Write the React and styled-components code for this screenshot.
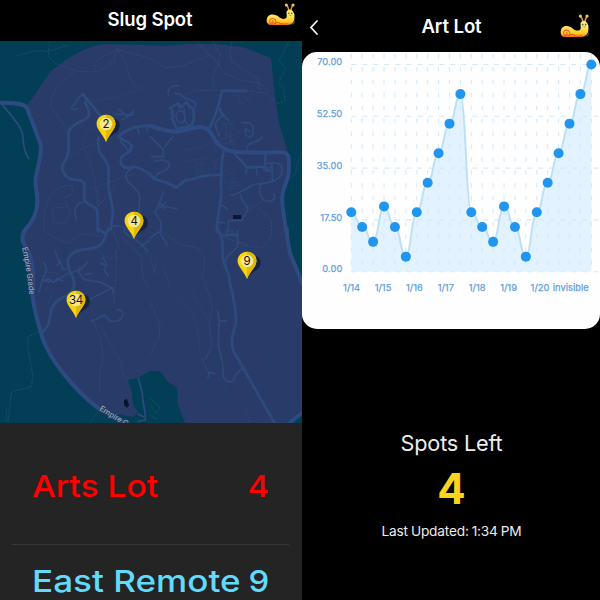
import React from 'react';
import styled, { createGlobalStyle } from 'styled-components';

const GlobalStyle = createGlobalStyle`
  *, *::before, *::after { box-sizing: border-box; }
  body { margin: 0; background: #000; font-family: Inter, "Liberation Sans", sans-serif; }
`;

const Screens = styled.main`
  display: grid;
  grid-template-columns: 302px 298px;
  width: 600px;
  height: 600px;
  overflow: hidden;
`;

const Screen = styled.section`
  display: flex;
  flex-direction: column;
  height: 600px;
  overflow: hidden;
  background: #000;
`;

const Header = styled.header`
  flex: none;
  display: grid;
  grid-template-columns: 36px 1fr 36px;
  height: ${(p) => p.$height}px;
  padding: ${(p) => p.$padding};
  color: #fff;
`;

const Title = styled.h1`
  margin: ${(p) => p.$drop || 0}px 0 0;
  text-align: center;
  white-space: nowrap;
  font-size: ${(p) => p.$size}px;
  font-weight: 600;
  line-height: 24px;
  letter-spacing: -0.1px;
`;

const BackIcon = styled.svg`
  width: 12px;
  height: 18px;
  margin: 4px 0 0 -5px;
`;

const SlugSvg = styled.svg`
  justify-self: end;
  width: ${(p) => p.$width}px;
  height: ${(p) => p.$height}px;
`;

const MapView = styled.div`
  flex: none;
  position: relative;
  height: 382px;
  overflow: hidden;
  background: #023f57;
`;

const MapDrawing = styled.svg`
  display: block;
  width: 302px;
  height: 382px;
`;

const Pin = styled.div`
  position: absolute;
  left: ${(p) => p.$x - 10}px;
  top: ${(p) => p.$y - 41}px;
  width: 26px;
  height: 29px;
`;

const PinSvg = styled.svg`
  display: block;
  width: 26px;
  height: 29px;
`;

const PinLabel = styled.span`
  position: absolute;
  left: 0;
  top: 3px;
  width: 20px;
  text-align: center;
  font-size: 11.5px;
  line-height: 14px;
  letter-spacing: -0.2px;
  color: #15130a;
`;

const LotList = styled.div`
  flex: 1;
  display: flex;
  flex-direction: column;
  padding: 0 13px 0 12px;
  background: #242424;
`;

const LotRow = styled.div`
  flex: none;
  display: flex;
  justify-content: space-between;
  height: 122px;
  padding: ${(p) => p.$top}px 20px 0 20px;
  border-bottom: 1px solid #373737;
  color: ${(p) => p.$color};
  font-size: 30.5px;
  font-weight: 500;
  line-height: 40px;
  white-space: nowrap;
`;

const LotName = styled.span`
  transform: scaleX(${(p) => p.$stretch});
  transform-origin: left;
`;

const LotCount = styled.span`
  transform: scaleX(1.08);
  transform-origin: right;
`;

const ChartCard = styled.div`
  flex: none;
  height: 277px;
  border-radius: 15px;
  background: #fefefe;
  overflow: hidden;
`;

const ChartSvg = styled.svg`
  display: block;
  width: 298px;
  height: 277px;
  font-family: Inter, sans-serif;
  font-size: 9.4px;
`;

const Summary = styled.div`
  display: flex;
  flex-direction: column;
  align-items: center;
  padding: 99px 0 0 1px;
  color: #ececec;
  white-space: nowrap;
`;

const SummaryTitle = styled.div`
  font-size: 21.7px;
  line-height: 30px;
  letter-spacing: -0.2px;
`;

const SpotCount = styled.div`
  margin-top: 8px;
  font-size: 42px;
  font-weight: 700;
  line-height: 46px;
  color: #fbd31c;
`;

const Updated = styled.div`
  margin-top: 9px;
  font-size: 13.7px;
  line-height: 20px;
  letter-spacing: -0.2px;
  word-spacing: -0.6px;
`;

function Slug({ id, width, height }) {
  return (
    <SlugSvg viewBox="0 0 90 70" preserveAspectRatio="none" $width={width} $height={height}>
      <defs>
        <linearGradient id={id} x1="0" y1="0" x2="0" y2="1">
          <stop offset="0.35" stopColor="#ffe66b" />
          <stop offset="0.78" stopColor="#ffcb20" />
          <stop offset="1" stopColor="#f4711b" />
        </linearGradient>
      </defs>
      <g fill="none" stroke="#d39a48" strokeWidth="4.5" strokeLinecap="round">
        <path d="M69 24 Q68 14 62 7M75 23 Q75 14 81 7" />
      </g>
      <circle cx="61" cy="6" r="4.8" fill="#f2bd69" />
      <circle cx="81" cy="6" r="4.8" fill="#f2bd69" />
      <path d="M78 24 Q87 33 87 49 Q86 66 65 67 L84 65 Q90 52 86 34Z" fill="#2b5d87" />
      <path d="M2 54 C2 30 28 32 38 42 C48 51 61 50 62 42 C64 34 58 27 65 22 C73 15 84 24 85 36 C87 53 82 67 63 67 L15 67 C7 67 2 62 2 54Z" fill={`url(#${id})`} />
      <path d="M27 63 C34 56 27 46 18 47 C10 48 8 59 16 61 C23 62 23 54 18 54" fill="none" stroke="#e96128" strokeWidth="3.2" />
      <path d="M8 64 C25 68 31 57 37 59 C45 66 58 65 65 63" fill="none" stroke="#e84f24" strokeWidth="3" />
      <circle cx="68" cy="31" r="2.4" fill="#315b68" />
      <circle cx="77" cy="31" r="2.4" fill="#315b68" />
      <path d="M70 37 Q73 39 76 37" fill="none" stroke="#826b2b" strokeWidth="2" />
    </SlugSvg>
  );
}

const TILES = [
  {
    at: [0, 40],
    wide: [
      'M-5 188 C30 188 65 188 78 200 C85 210 105 270 122 314 C125 345 116 370 110 400 C99 430 114 460 112 485 C112 515 100 545 72 574',
    ],
    main: [
      'M262 182 L255 190 C268 205 270 225 262 233 C240 248 205 258 205 280 C208 340 205 350 190 370 C180 385 192 405 207 416 C225 422 245 415 253 430 V480 C262 498 288 495 292 515 L294 574',
      'M248 162 L325 255 M295 292 C293 330 297 338 312 355 C330 378 325 385 326 450 C333 480 340 500 338 520 L332 570',
      'M355 290 C375 270 410 254 456 258 M357 290 C365 305 392 302 395 318 C396 342 362 340 362 360 C362 390 390 384 399 380 C420 382 435 392 452 405',
    ],
    thin: [
      'M5 192 C35 228 65 260 68 285 C71 325 76 346 87 355',
      'M232 205 C222 213 210 205 216 199 C229 193 229 180 237 172 L250 162',
      'M253 487 C228 486 218 513 230 540',
      'M400 382 C375 398 373 408 385 425 C405 448 425 455 418 490 L417 530',
      'M345 222 L400 225 M358 209 L383 232 M366 240 C385 228 393 226 400 213',
      'M412 264 L418 280 M442 258 V275 M360 305 C372 307 377 325 385 332',
      'M340 560 C360 550 375 566 390 574',
    ],
    faint: ['M300 260 C262 260 248 292 248 315 C266 350 282 390 289 455', 'M205 350 C245 330 260 315 302 310', 'M285 183 C320 170 352 182 380 160 L450 132', 'M270 447 L400 402'],
    dashed: [
      'M50 48 C80 40 105 27 140 35 L200 16 M150 5 C140 45 145 58 175 74 L235 95 H290 C320 88 325 70 342 62 L350 30',
      'M285 90 C280 55 305 55 350 28 L450 55 M350 25 C378 62 385 85 388 110 L405 142',
      'M220 98 C180 130 150 160 152 200 L200 264',
      'M135 570 C120 520 150 455 180 440 L215 435 L218 460 L190 474 L205 500 L155 505 L162 550 L200 548 L212 510',
      'M290 450 L295 500 L315 474 L350 440',
    ],
  },
  {
    at: [150, 40],
    wide: ['M0 258 C45 270 65 278 90 274 L145 261 C192 260 183 302 216 322 C242 340 280 339 390 337 C418 338 419 345 416 400 C411 435 391 445 398 500 L408 574'],
    main: [
      'M222 328 C210 370 218 410 212 430 C222 470 203 500 200 574',
      'M178 264 C195 235 208 190 216 152 L288 153',
      'M0 405 C25 430 45 418 78 443 L108 420 C142 421 143 402 212 405',
      'M255 340 C260 355 280 364 288 380 C310 388 330 374 350 385 M347 338 L345 380',
      'M60 205 L85 190 L90 203 L110 186 L120 202 L130 207 L132 235 L125 258 L80 266 L68 240 L67 212',
    ],
    thin: [
      'M55 164 C50 145 67 135 85 139',
      'M75 160 L90 162 L105 175 L118 178 L138 190 L132 205 L120 202 M78 232 C77 205 105 206 105 235 C96 258 81 247 78 232 M102 205 L106 247 L122 260',
      'M210 204 L218 221 L236 242 M205 205 L218 228 C207 235 194 245 196 257 L208 287',
      'M275 248 C313 246 311 260 309 282 C301 303 277 281 288 266 L300 276',
      'M290 332 C288 300 321 314 336 291',
      'M0 290 L40 328 V350 H5 M44 320 L68 290',
      'M350 371 C380 365 406 370 393 405 C382 426 340 431 317 432 C279 445 268 466 240 466',
      'M350 387 L360 390 L363 375 M367 375 V420 M290 385 L288 400 M320 388 V404 M340 390 L365 395',
      'M333 432 C323 460 335 486 360 484 C375 482 376 468 371 460',
      'M40 455 C27 502 13 510 16 520 C31 540 37 548 32 574',
      'M25 495 L80 507 M28 505 L48 485 M30 488 L42 508',
      'M272 465 C279 500 295 493 293 510 L275 542 M212 495 L232 506 M205 548 H223 M235 574 V542 H278',
      'M15 363 C48 355 68 366 53 387 L22 403 L12 420',
    ],
    faint: [
      'M207 286 L218 312 L255 302 L270 280 L252 270 L245 250 L223 250 L207 286 M212 270 L262 312 M222 250 L251 319 M211 300 L270 275 M230 248 L225 315 M244 246 L239 316',
      'M138 362 V400 L170 390 V370 H138 M155 365 V405 M175 400 V370 L193 360 V398 M180 387 H205 M193 374 L206 353',
      'M225 405 V430 L273 425 M240 400 L260 394 M246 405 V445 H280 M258 405 V440 M232 447 L280 430 M225 390 L240 405',
      'M105 330 C145 325 173 312 189 310 L200 338 M86 372 C120 355 150 364 176 351',
      'M274 228 V242 M255 162 L278 191 L309 160 M280 165 L300 190 M267 192 V158',
    ],
    dashed: [
      'M0 55 L45 83 L90 80 L140 60 L180 45 L205 70 L220 98 L267 120 C325 130 341 130 355 158 M135 0 L180 45 M185 0 L210 38 L207 72 L188 110 L190 150 M247 0 L240 35 L245 65 L325 118 L332 158',
      'M110 164 L132 152 L208 151 M290 152 L350 160 L384 192',
      'M385 190 L405 182 L400 145 L386 130 L405 85 L387 60 L400 38 L418 0',
      'M456 338 L440 375 L437 400 L420 418',
      'M300 505 L340 482 M324 505 L365 540 V574',
    ],
  },
  {
    at: [0, 230],
    wide: ['M83 -10 C60 15 65 38 82 58 C105 105 98 150 98 200 C105 255 118 290 122 304 C140 385 230 485 295 535 L380 580'],
    main: [
      'M325 -5 C312 40 300 55 265 57 C195 60 198 100 210 125 C232 165 222 180 200 197 C142 220 155 254 145 285 L128 307',
      'M300 0 L318 13',
    ],
    thin: [
      'M117 187 L127 152 L165 156 L195 135 L245 117 L262 96 M126 151 L140 120 L132 96 M132 150 L147 146 L160 158 L172 144 L188 153 M165 62 L178 100 L170 105 M178 90 L190 118 L198 118',
      'M240 110 L236 127 L254 149 L300 156 L340 176 L338 190 M275 130 L255 133 M270 208 L338 173 M310 82 L320 105 L313 120 L325 138 M302 98 L314 105',
      'M273 272 C292 270 300 257 315 256 L330 273 C360 280 375 258 365 242 L350 239',
      'M370 0 C383 25 414 21 443 66 M422 50 L450 30',
      'M415 445 L427 490 C428 525 438 545 436 570 L415 574 M414 552 L430 560',
    ],
    faint: ['M188 264 L200 268 M130 125 L180 130 M147 157 L137 179 M297 144 L316 155'],
    dashed: [
      'M115 307 L84 320 L83 350 L98 435 L95 470 L35 484 L24 574',
      'M280 275 L300 320 L310 380 L300 425 L298 490 M350 60 L348 145 L340 225 M302 285 L328 340 L360 390 L368 430 L380 450',
      'M130 0 L165 25 L205 40 L245 10 L303 20 M160 180 L145 220 M290 60 L330 90 L352 62 M370 25 L420 75 L433 150 L450 180',
      'M270 577 L302 535 M340 5 L360 60 M20 540 V574',
    ],
  },
  {
    at: [150, 230],
    wide: ['M410 -5 C410 35 418 50 420 70 L443 125 L456 160', 'M415 582 L460 545'],
    main: ['M202 -5 C218 25 218 24 218 80 C225 125 240 125 240 160 C258 230 259 260 258 280 C244 320 242 345 251 365 L280 415 L374 580'],
    thin: [
      'M204 243 L208 274 L230 272 M208 275 C203 320 206 330 206 350 C213 390 221 390 219 430 C217 455 248 465 252 445 C259 430 267 421 281 413',
      'M0 24 L27 5 L38 22 L52 45 M218 15 L263 18 M263 0 V50 L231 80 C225 90 230 100 225 108 M230 0 V19 M174 443 L177 427 L195 431',
      'M232 14 H263 M246 14 V0',
    ],
    faint: ['M0 70 L38 105 L60 170 L130 250 L145 310 L150 365 L170 420 M85 155 L130 190 L178 280 L184 350 L164 390 M195 430 L235 490 L285 532 L298 574'],
    dashed: [
      'M35 5 L85 40 L144 55 L165 85 L158 145 L187 220 L178 290 L185 350 L160 400 L178 430',
      'M0 215 L30 280 L28 320 L0 375 M260 42 L335 55 L362 25 L365 0 M0 85 L15 130 L18 95 M0 505 L30 530 L20 550 L0 525 M0 555 L22 567',
      'M210 15 L255 35 L290 40 V55',
    ],
  },
];

function CampusMap() {
  return (
    <MapDrawing viewBox="0 41 302 382">
      <path
        fill="#293b68"
        d="M31 100L50 72L67 59L83 50Q92 46 103 44L143 45L163 46L187 44L217 44L243 47L271 58L275 97L279 123L288 152L289 173L282 197L287 230L288 247L302 280V412L287 423H185L178 405L177 388L168 382L160 371L150 371L138 378L128 380L132 393L133 405L138 412L133 417L123 415L110 412L97 407L70 385L50 357L38 330L32 303L32 280L22 240L25 230L36 210L35 173L41 147L27 105Z"
      />
      {TILES.map(({ at, wide, main, thin, faint, dashed }) => (
        <g key={at.join()} transform={`translate(${at[0]} ${at[1]}) scale(.33333)`} fill="none" strokeLinejoin="round" strokeLinecap="round">
          <path d={dashed.join('')} stroke="#3c608c" strokeOpacity=".5" strokeWidth="2.2" strokeDasharray="5 5" />
          <path d={faint.join('')} stroke="#2c4979" strokeOpacity=".7" strokeWidth="2.5" />
          <path d={thin.join('')} stroke="#2d4a7d" strokeWidth="5" />
          <path d={main.join('')} stroke="#2d4a7d" strokeWidth="8.5" />
          <path d={wide.join('')} stroke="#2e4b81" strokeWidth="12" />
        </g>
      ))}
      <path d="M233 215H241V219H233Z" fill="#0d1730" />
      <path d="M124 400L127 399L129 405L127 408L124 405Z" fill="#07152c" />
      <path id="grade-west" d="M22 248Q27 268 30.5 306" fill="none" />
      <path id="grade-south" d="M99 410L132 430" fill="none" />
      <g fill="#aab4ca" stroke="#253c60" strokeWidth="1.5" paintOrder="stroke" fontFamily="Roboto, sans-serif" fontSize="7.9">
        <text><textPath href="#grade-west">Empire Grade</textPath></text>
        <text><textPath href="#grade-south">Empire Gr</textPath></text>
      </g>
    </MapDrawing>
  );
}

function LotPin({ x, y, count }) {
  return (
    <Pin $x={x} $y={y}>
      <PinSvg viewBox="0 0 26 29">
        <path d="M10 28C12 23 17 21 22 17C25 12 24 6 19 5L13 6Z" fill="#162343" />
        <path d="M10 0.7C4.3.7.4 5 .6 10.2C.9 16 7 20 10 28C13 20 19.1 16 19.4 10.2C19.6 5 15.7.7 10 .7Z" fill="#f8d50b" />
        <path d="M10 .7C15.7.7 19.6 5 19.4 10.2C19.1 16 13 20 10 28Z" fill="#e2b706" />
        <circle cx="10" cy="10" r="6.3" fill="#f8e78c" />
      </PinSvg>
      <PinLabel>{count}</PinLabel>
    </Pin>
  );
}

const READINGS = [20, 15, 10, 22, 15, 5, 20, 30, 40, 50, 60, 20, 15, 10, 22, 15, 5, 20, 30, 40, 50, 60, 70];
const POINTS = READINGS.map((value, i) => [49.3 + i * 10.91, 219.4 - value * 2.955]);
const Y_LABELS = ['70.00', '52.50', '35.00', '17.50', '0.00'];
const X_LABELS = ['1/14', '1/15', '1/16', '1/17', '1/18', '1/19', '1/20', 'invisible'];

const curve = POINTS.slice(1).reduce((d, [x, y], i) => {
  const [px, py] = POINTS[i];
  const mx = (px + x) / 2;
  const my = (py + y) / 2;
  return `${d} Q${(px + mx) / 2} ${py} ${mx} ${my} Q${(mx + x) / 2} ${y} ${x} ${y}`;
}, `M${POINTS[0][0]} ${POINTS[0][1]}`);

function Chart() {
  return (
    <ChartSvg viewBox="0 0 298 277">
      <path d={`${curve} V219.4 H49.3Z`} fill="#e2f2fe" />
      <g stroke="#d3eafa" strokeWidth="1.1">
        {POINTS.map(([x]) => <path key={x} d={`M${x} 2V219.4`} strokeDasharray="4.5 8.4" />)}
        {Y_LABELS.map((label, i) => <path key={label} d={`M49.3 ${12.5 + i * 51.8}H298`} strokeDasharray="5 6" />)}
      </g>
      <path d={curve} fill="none" stroke="#bce1f7" strokeWidth="2" />
      {POINTS.map(([x, y]) => <circle key={x} cx={x} cy={y} r="5" fill="#2196f0" />)}
      <g fill="#659fdb" stroke="#659fdb" strokeWidth=".25">
        {Y_LABELS.map((label, i) => <text key={label} x="40.3" y={12.8 + i * 51.9} textAnchor="end">{label}</text>)}
        {X_LABELS.map((label, i) => <text key={label} x={i === 7 ? 268.8 : 49.6 + i * 31.4} y="238.5" textAnchor="middle">{label}</text>)}
      </g>
    </ChartSvg>
  );
}

export default function App() {
  return (
    <>
      <GlobalStyle />
      <Screens>
        <Screen>
          <Header $height={41} $padding="3px 6px 0 4px">
            <span />
            <Title $size={18.5} $drop={4}>Slug Spot</Title>
            <Slug id="slug-home" width={30} height={23} />
          </Header>
          <MapView>
            <CampusMap />
            <LotPin x={106} y={114} count={2} />
            <LotPin x={134} y={210.5} count={4} />
            <LotPin x={247} y={251} count={9} />
            <LotPin x={76} y={290} count={34} />
          </MapView>
          <LotList>
            <LotRow $top={43} $color="#ff0000">
              <LotName $stretch={1.1}>Arts Lot</LotName>
              <LotCount>4</LotCount>
            </LotRow>
            <LotRow $top={16} $color="#61dafb">
              <LotName $stretch={1.15}>East Remote</LotName>
              <LotCount>9</LotCount>
            </LotRow>
          </LotList>
        </Screen>
        <Screen>
          <Header $height={52} $padding="14px 10px 0 11px">
            <BackIcon viewBox="0 0 12 18">
              <path d="M9 3L3 9.5L9 16" fill="none" stroke="#f1f1f1" strokeWidth="1.8" strokeLinecap="round" />
            </BackIcon>
            <Title $size={18.6}>Art Lot</Title>
            <Slug id="slug-detail" width={30} height={24} />
          </Header>
          <ChartCard><Chart /></ChartCard>
          <Summary>
            <SummaryTitle>Spots Left</SummaryTitle>
            <SpotCount>4</SpotCount>
            <Updated>Last Updated: 1:34 PM</Updated>
          </Summary>
        </Screen>
      </Screens>
    </>
  );
}
